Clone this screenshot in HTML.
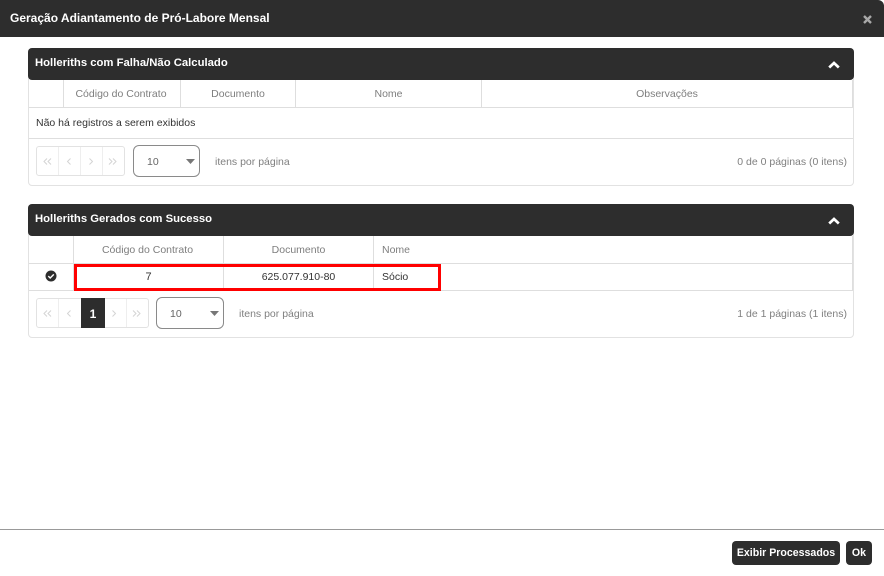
<!DOCTYPE html>
<html lang="pt-BR"><head><meta charset="utf-8"><title>Geração Adiantamento</title>
<style>
html,body{margin:0;padding:0;width:884px;height:576px;overflow:hidden;background:#fff;font-family:"Liberation Sans",sans-serif;font-size:11px;color:#333}
div,span{position:absolute;box-sizing:border-box;white-space:nowrap}
.bar{background:#2d2d2d;color:#fff;font-weight:bold;font-size:11.3px}
.t{line-height:14px;margin-top:1px}
.bar.t{margin-top:0}
.c{text-align:center}
.h{color:#7e7e7e;font-size:10.5px}
.ln{background:#dedede}
.g{color:#808080;font-size:10.5px}
.pg{border:1px solid #e2e2e2;border-radius:3px;background:#fff}
.sel{border:1px solid #8a8a8a;border-radius:6px;background:#fff}
svg{position:absolute;display:block}
</style></head><body>
<div class="bar" style="left:0;top:0;width:884px;height:37px;border-radius:0 6px 0 0"></div>
<div class="t bar" style="left:10px;top:11px;background:none;font-size:12px">Geração Adiantamento de Pró-Labore Mensal</div>
<svg style="left:863px;top:15px" width="9" height="9" viewBox="0 0 9 9"><path d="M1 1L8 8M8 1L1 8" stroke="#a8a8a8" stroke-width="2.400"/></svg>

<!-- Painel 1 -->
<div style="left:28px;top:48px;width:826px;height:138px;border:1px solid #e2e2e2;border-radius:4px"></div>
<div class="bar" style="left:28px;top:48px;width:826px;height:32px;border-radius:4px"></div>
<div class="t bar" style="left:35px;top:56px;background:none">Holleriths com Falha/Não Calculado</div>
<svg style="left:828px;top:61px" width="12" height="8" viewBox="0 0 12 8"><path d="M1.200 6.500L6 2L10.800 6.500" fill="none" stroke="#fff" stroke-width="2.700"/></svg>
<div class="ln" style="left:29px;top:107px;width:824px;height:1px"></div>
<div class="ln" style="left:29px;top:138px;width:824px;height:1px"></div>
<div class="ln" style="left:63px;top:80px;width:1px;height:27px"></div>
<div class="ln" style="left:180px;top:80px;width:1px;height:27px"></div>
<div class="ln" style="left:295px;top:80px;width:1px;height:27px"></div>
<div class="ln" style="left:481px;top:80px;width:1px;height:27px"></div>
<div class="ln" style="left:852px;top:80px;width:1px;height:27px"></div>
<div class="t h c" style="left:63px;top:86px;width:116px">Código do Contrato</div>
<div class="t h c" style="left:181px;top:86px;width:114px">Documento</div>
<div class="t h c" style="left:296px;top:86px;width:185px">Nome</div>
<div class="t h c" style="left:482px;top:86px;width:370px">Observações</div>
<div class="t" style="left:36px;top:115px;font-size:10.5px">Não há registros a serem exibidos</div>

<div class="pg" style="left:36px;top:146px;width:89px;height:30px"></div>
<div class="ln" style="left:58px;top:147px;width:1px;height:28px;background:#eee"></div>
<div class="ln" style="left:80px;top:147px;width:1px;height:28px;background:#eee"></div>
<div class="ln" style="left:102px;top:147px;width:1px;height:28px;background:#eee"></div>
<svg style="left:36px;top:146px" width="89" height="30" viewBox="0 0 89 30" fill="none" stroke="#d4d4d4" stroke-width="1"><path d="M11 12.500L8 15.500L11 18.500M15 12.500L12 15.500L15 18.500M34.500 12.500L31.500 15.500L34.500 18.500M53.500 12.500L56.500 15.500L53.500 18.500M73 12.500L76 15.500L73 18.500M77 12.500L80 15.500L77 18.500"/></svg>
<div class="sel" style="left:133px;top:145px;width:67px;height:32px"></div>
<div class="t" style="left:147px;top:154px;color:#666;font-size:10.5px">10</div>
<svg style="left:186px;top:159px" width="9" height="5" viewBox="0 0 9 5"><path d="M0 0H9L4.500 5Z" fill="#777"/></svg>
<div class="t g" style="left:215px;top:154px">itens por página</div>
<div class="t g" style="right:37px;top:154px">0 de 0 páginas (0 itens)</div>

<!-- Painel 2 -->
<div style="left:28px;top:204px;width:826px;height:134px;border:1px solid #e2e2e2;border-radius:4px"></div>
<div class="bar" style="left:28px;top:204px;width:826px;height:32px;border-radius:4px"></div>
<div class="t bar" style="left:35px;top:212px;background:none">Holleriths Gerados com Sucesso</div>
<svg style="left:828px;top:217px" width="12" height="8" viewBox="0 0 12 8"><path d="M1.200 6.500L6 2L10.800 6.500" fill="none" stroke="#fff" stroke-width="2.700"/></svg>
<div class="ln" style="left:29px;top:263px;width:824px;height:1px"></div>
<div class="ln" style="left:29px;top:290px;width:824px;height:1px"></div>
<div class="ln" style="left:73px;top:236px;width:1px;height:54px"></div>
<div class="ln" style="left:223px;top:236px;width:1px;height:54px"></div>
<div class="ln" style="left:373px;top:236px;width:1px;height:54px"></div>
<div class="ln" style="left:852px;top:236px;width:1px;height:54px"></div>
<div class="t h c" style="left:73px;top:242px;width:149px">Código do Contrato</div>
<div class="t h c" style="left:224px;top:242px;width:149px">Documento</div>
<div class="t h" style="left:382px;top:242px">Nome</div>
<svg style="left:45px;top:270px" width="12" height="12" viewBox="0 0 12 12"><circle cx="6" cy="6" r="5.500" fill="#2d2d2d"/><path d="M3.300 6.100L5.200 8L8.800 4.400" fill="none" stroke="#fff" stroke-width="1.400"/></svg>
<div class="t c" style="left:74px;top:269px;width:149px;font-size:11px">7</div>
<div class="t c" style="left:224px;top:269px;width:149px;font-size:10.5px">625.077.910-80</div>
<div class="t" style="left:382px;top:269px;font-size:10.5px">Sócio</div>
<div style="left:74px;top:264px;width:367px;height:27px;border:3px solid #f00"></div>

<div class="pg" style="left:36px;top:298px;width:113px;height:30px"></div>
<div class="ln" style="left:58px;top:299px;width:1px;height:28px;background:#eee"></div>
<div class="ln" style="left:126px;top:299px;width:1px;height:28px;background:#eee"></div>
<div style="left:81px;top:298px;width:24px;height:30px;background:#2d2d2d"></div>
<div class="t c" style="left:81px;top:306px;width:24px;color:#fff;font-weight:bold;font-size:12px">1</div>
<svg style="left:36px;top:298px" width="113" height="30" viewBox="0 0 113 30" fill="none" stroke="#d4d4d4" stroke-width="1"><path d="M11 12.500L8 15.500L11 18.500M15 12.500L12 15.500L15 18.500M34.500 12.500L31.500 15.500L34.500 18.500M76.500 12.500L79.500 15.500L76.500 18.500M97 12.500L100 15.500L97 18.500M101 12.500L104 15.500L101 18.500"/></svg>
<div class="sel" style="left:156px;top:297px;width:68px;height:32px"></div>
<div class="t" style="left:170px;top:306px;color:#666;font-size:10.5px">10</div>
<svg style="left:210px;top:311px" width="9" height="5" viewBox="0 0 9 5"><path d="M0 0H9L4.500 5Z" fill="#777"/></svg>
<div class="t g" style="left:239px;top:306px">itens por página</div>
<div class="t g" style="right:37px;top:306px">1 de 1 páginas (1 itens)</div>

<!-- Rodapé -->
<div style="left:0;top:529px;width:884px;height:1px;background:#999"></div>
<div class="bar c" style="left:732px;top:541px;width:108px;height:24px;border-radius:4px;line-height:25px;font-size:10.6px">Exibir Processados</div>
<div class="bar c" style="left:846px;top:541px;width:26px;height:24px;border-radius:4px;line-height:25px;font-size:10.6px">Ok</div>
</body></html>
